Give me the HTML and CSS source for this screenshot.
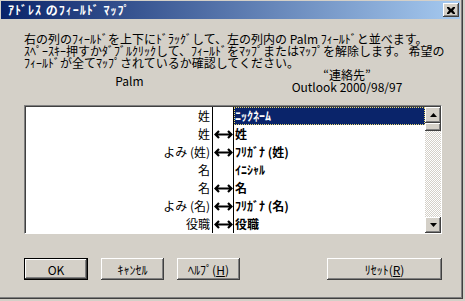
FILE: index.html
```html
<!DOCTYPE html>
<html lang="ja">
<head>
    <meta charset="UTF-8">
    <title>ｱﾄﾞﾚｽ のﾌｨｰﾙﾄﾞ ﾏｯﾌﾟ</title>
    <link rel="stylesheet" href="styles.css">
</head>
<body>
    <div class="window">
        <div class="titlebar">
            <span class="title">ｱﾄﾞﾚｽ のﾌｨｰﾙﾄﾞ ﾏｯﾌﾟ</span>
            <button class="title-close" type="button" aria-label="閉じる">
                <svg width="8" height="7" viewBox="0 0 8 7">
                    <path d="M0 0h2l2 2 2-2h2v1L6 3.5 8 6v1H6L4 5 2 7H0V6l2-2.5L0 1z" fill="#000"/>
                </svg>
            </button>
        </div>

        <div class="dialog-body">
            <p class="intro">
                右の列のﾌｨｰﾙﾄﾞを上下にﾄﾞﾗｯｸﾞして、左の列内の Palm ﾌｨｰﾙﾄﾞと並べます。<br>
                ｽﾍﾟｰｽｷｰ押すかﾀﾞﾌﾞﾙｸﾘｯｸして、ﾌｨｰﾙﾄﾞをﾏｯﾌﾟまたはﾏｯﾌﾟを解除します。 希望の<br>
                ﾌｨｰﾙﾄﾞが全てﾏｯﾌﾟされているか確認してください。
            </p>

            <div class="headers">
                <div class="head-palm">Palm</div>
                <div class="head-outlook">“連絡先”<br>Outlook 2000/98/97</div>
            </div>

            <div class="mapbox">
                <div class="map-rows">
                    <div class="map-row">
                        <div class="palm-cell">姓</div>
                        <div class="link-cell"></div>
                        <div class="outlook-cell selected">ﾆｯｸﾈｰﾑ</div>
                    </div>
                    <div class="map-row">
                        <div class="palm-cell">姓</div>
                        <div class="link-cell linked"></div>
                        <div class="outlook-cell">姓</div>
                    </div>
                    <div class="map-row">
                        <div class="palm-cell">よみ (姓)</div>
                        <div class="link-cell linked"></div>
                        <div class="outlook-cell">ﾌﾘｶﾞﾅ (姓)</div>
                    </div>
                    <div class="map-row">
                        <div class="palm-cell">名</div>
                        <div class="link-cell"></div>
                        <div class="outlook-cell">ｲﾆｼｬﾙ</div>
                    </div>
                    <div class="map-row">
                        <div class="palm-cell">名</div>
                        <div class="link-cell linked"></div>
                        <div class="outlook-cell">名</div>
                    </div>
                    <div class="map-row">
                        <div class="palm-cell">よみ (名)</div>
                        <div class="link-cell linked"></div>
                        <div class="outlook-cell">ﾌﾘｶﾞﾅ (名)</div>
                    </div>
                    <div class="map-row">
                        <div class="palm-cell">役職</div>
                        <div class="link-cell linked"></div>
                        <div class="outlook-cell">役職</div>
                    </div>
                </div>

                <div class="scrollbar">
                    <div class="scroll-btn">
                        <svg width="7" height="4" viewBox="0 0 7 4"><path d="M3.5 0L7 4H0z" fill="#000"/></svg>
                    </div>
                    <div class="scroll-thumb"></div>
                    <div class="scroll-track"></div>
                    <div class="scroll-btn">
                        <svg width="7" height="4" viewBox="0 0 7 4"><path d="M0 0h7L3.5 4z" fill="#000"/></svg>
                    </div>
                </div>
            </div>

            <div class="buttons">
                <button class="btn btn-default" type="button">OK</button>
                <button class="btn" type="button">ｷｬﾝｾﾙ</button>
                <button class="btn" type="button">ﾍﾙﾌﾟ(<u>H</u>)</button>
                <button class="btn btn-reset" type="button">ﾘｾｯﾄ(<u>R</u>)</button>
            </div>
        </div>
    </div>
</body>
</html>
```

FILE: styles.css
```css
body {
    margin: 0;
    background-color: #d4d0c8;
    font-family: "Noto Sans CJK JP", "Noto Sans", sans-serif;
    font-size: 12px;
    color: #000;
}

.window {
    width: 463px;
    height: 299px;
    box-sizing: border-box;
    padding: 1px 3px 3px 1px;
    background-color: #d4d0c8;
    box-shadow: inset -1px -1px #404040, inset -2px -2px #808080;
}

.titlebar {
    height: 18px;
    display: flex;
    align-items: center;
    justify-content: space-between;
    padding: 0 1px 0 7px;
    background: linear-gradient(to right, #0a246a, #a6caf0);
}

.title {
    color: #fff;
    font-weight: bold;
    line-height: 18px;
    letter-spacing: 1px;
    white-space: nowrap;
}

.title-close {
    width: 16px;
    height: 14px;
    padding: 0;
    border: none;
    display: flex;
    align-items: center;
    justify-content: center;
    background-color: #d4d0c8;
    box-shadow: inset -1px -1px #404040, inset 1px 1px #fff, inset -2px -2px #808080;
}

.dialog-body {
    padding: 14px 0 0 23px;
}

.intro {
    margin: 0;
    line-height: 12px;
    white-space: nowrap;
}

.headers {
    display: grid;
    grid-template-columns: 211px 224px;
    align-items: center;
    text-align: center;
    line-height: 12px;
}

.mapbox {
    width: 418px;
    height: 129px;
    margin-top: 12px;
    box-sizing: border-box;
    border-style: solid;
    border-width: 1px;
    border-color: #808080 #fff #fff #808080;
    display: flex;
    overflow: hidden;
}

.map-rows {
    flex: 1;
    background-color: #fff;
    border-top: 1px solid #404040;
    border-left: 1px solid #404040;
    overflow: hidden;
}

.map-row {
    display: grid;
    grid-template-columns: 186px 22px 1fr;
    height: 18px;
    line-height: 18px;
}

.palm-cell {
    color: #000;
    text-align: right;
    padding-right: 2px;
    white-space: nowrap;
}

.link-cell {
    border-left: 1px solid #000;
    border-right: 1px solid #000;
}

.link-cell.linked {
    background: url("data:image/svg+xml,%3Csvg xmlns='http://www.w3.org/2000/svg' width='19' height='9'%3E%3Cpath d='M5 1L1.5 4.5 5 8M14 1l3.5 3.5L14 8M2 4.5h15' fill='none' stroke='%23000' stroke-width='2.2'/%3E%3C/svg%3E") center / 19px 9px no-repeat;
}

.outlook-cell {
    font-weight: bold;
    padding-left: 1px;
    white-space: nowrap;
}

.outlook-cell.selected {
    background-color: #0a246a;
    color: #fff;
    outline: 1px dotted #e8d870;
    outline-offset: -1px;
}

.scrollbar {
    width: 16px;
    display: flex;
    flex-direction: column;
    border-top: 1px solid #404040;
    background-color: #d4d0c8;
}

.scroll-btn,
.scroll-thumb {
    flex: none;
    background-color: #d4d0c8;
    box-shadow: inset -1px -1px #404040, inset 1px 1px #fff, inset -2px -2px #808080;
}

.scroll-btn {
    height: 16px;
    display: flex;
    align-items: center;
    justify-content: center;
}

.scroll-thumb {
    height: 8px;
}

.scroll-track {
    flex: 1;
    background: repeating-conic-gradient(#d4d0c8 0 25%, #fff 0 50%) 0 0 / 2px 2px;
}

.buttons {
    display: flex;
    gap: 13px;
    width: 418px;
    margin-top: 24px;
}

.btn {
    width: 63px;
    height: 22px;
    padding: 0;
    border: none;
    font-family: inherit;
    font-size: 12px;
    color: #000;
    background-color: #d4d0c8;
    box-shadow: inset -1px -1px #404040, inset 1px 1px #fff, inset -2px -2px #808080;
}

.btn-default {
    width: 64px;
    border: 1px solid #000;
}

.btn-reset {
    width: 115px;
    margin-left: auto;
}
```
